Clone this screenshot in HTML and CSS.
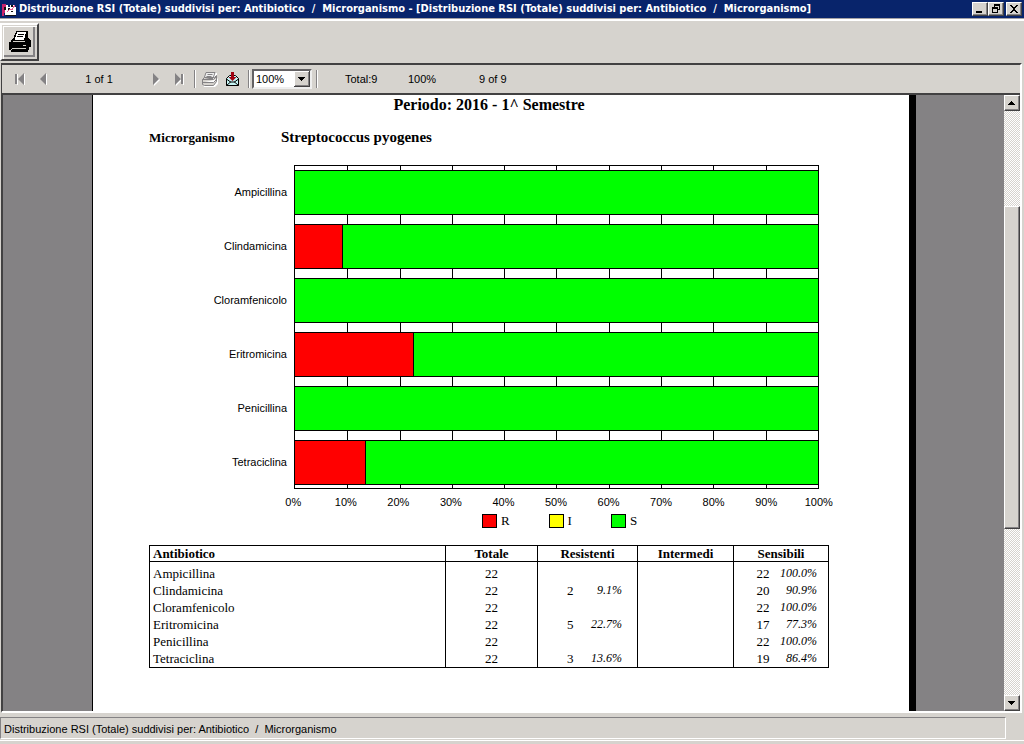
FILE: index.html
```html
<!DOCTYPE html>
<html lang="it">
<head>
<meta charset="utf-8">
<title>Distribuzione RSI (Totale)</title>
<link rel="stylesheet" href="styles.css">
</head>
<body>
<header class="titlebar">
  <svg class="app-icon" width="16" height="16" viewBox="0 0 16 16" shape-rendering="crispEdges">
    <path fill="#c8246c" d="M1 3h4v3H4v6H3v3H1z"/>
    <path fill="#fff" d="M5 4h2v2h2V4h5v2h1v8H4V8h1z"/>
    <path fill="#111" d="M3 6h2v3H3zM7 7h2v2H7zM10 4h2v2h-2zM5 14h10v1H5zM10 10h2v1h-2z"/>
    <path fill="none" stroke="#e85a90" d="M6 11l3-3 2 1 3-5"/>
  </svg>
  <h1 class="title">Distribuzione RSI (Totale) suddivisi per: Antibiotico &nbsp;/ &nbsp;Microrganismo - [Distribuzione RSI (Totale) suddivisi per: Antibiotico &nbsp;/ &nbsp;Microrganismo]</h1>
  <div class="window-buttons">
    <button class="win-btn" aria-label="Riduci a icona"><svg width="12" height="10" viewBox="0 0 12 10" shape-rendering="crispEdges"><path d="M2 7h6v2H2z"/></svg></button>
    <button class="win-btn" aria-label="Ripristina"><svg width="12" height="10" viewBox="0 0 12 10" shape-rendering="crispEdges"><path fill-rule="evenodd" d="M4 0h6v6H8V5h1V2H5v1H4zM2 3h6v6H2zM3 5v3h4V5z"/></svg></button>
    <button class="win-btn close" aria-label="Chiudi"><svg width="12" height="10" viewBox="0 0 12 10" shape-rendering="crispEdges"><path d="M2 1h2v1h1v1h2V2h1V1h2v1H9v1H8v1H7v2h1v1h1v1h1v1H8V8H7V7H5v1H4v1H2V8h1V7h1V6h1V4H4V3H3V2H2z"/></svg></button>
  </div>
</header>

<div class="toolbar">
  <button class="print-btn" aria-label="Stampa">
    <svg width="24" height="24" viewBox="0 0 24 24" shape-rendering="crispEdges">
      <path d="M8 1h12v9H5V8h1V5h1V3h1z"/>
      <path fill="#fff" d="M9 2h9v2h-1v4h-1v2H7V7h1V4h1z"/>
      <path d="M10 4h6v1h-6zM9 6h6v1H9z"/>
      <path d="M4 9h2v1h12V8h3v1h1v1h1v7h-2v3h-1v2H3v-2H1v-8h2v-2h1z"/>
      <path fill="#d4d0c8" d="M5 11h12v1H5zM15 15h3v1h-3zM3 19h1v-1h14v1H4v1H3z"/>
    </svg>
  </button>
</div>

<main class="viewer">
  <nav class="navbar" aria-label="Navigazione report">
    <button class="nav-btn" aria-label="Prima pagina"><svg width="12" height="14" viewBox="0 0 12 14"><path fill="#fff" d="M3 2h1v11H3zM10 2h1v11h-1z"/><path fill="#848284" d="M1 2h2v10H1zM10 1v12L4 7z"/></svg></button>
    <button class="nav-btn" aria-label="Pagina precedente"><svg width="12" height="14" viewBox="0 0 12 14"><path fill="#fff" d="M9 2h1v11H9z"/><path fill="#848284" d="M9 1v12L3 7z"/></svg></button>
    <span class="page-count">1 of 1</span>
    <button class="nav-btn" aria-label="Pagina successiva"><svg width="12" height="14" viewBox="0 0 12 14"><path fill="#fff" d="M4 2l6 6-6 6z"/><path fill="#848284" d="M3 1v12l6-6z"/></svg></button>
    <button class="nav-btn" aria-label="Ultima pagina"><svg width="12" height="14" viewBox="0 0 12 14"><path fill="#fff" d="M3 2l6 6-6 6zM10 2h1v11h-1z"/><path fill="#848284" d="M2 1v12l6-6zM8 2h2v10H8z"/></svg></button>
    <span class="rule"></span>
    <button class="nav-btn" aria-label="Stampa report">
      <svg width="17" height="16" viewBox="0 0 17 16">
        <path fill="#fff" d="M6 2h10v5l1 1v5l-3 3H3l-1-3z"/>
        <path fill="#eee" stroke="#848284" d="M5 1.500h9l-2 6H3z"/>
        <path stroke="#848284" d="M6.500 3.500h5M5.500 5.500h5"/>
        <path fill="#d6d3ce" stroke="#848284" d="M1.500 8.500l2-2h10l2-2v6l-3 4H3.500l-2-1zM1.500 8.500h11l3-3M1.500 11.500h11l3-3"/>
      </svg>
    </button>
    <button class="nav-btn" aria-label="Esporta">
      <svg width="15" height="16" viewBox="0 0 15 16">
        <path fill="#c6f5f5" stroke="#000" d="M1.500 7.500l3-3h6l3 3v7h-12z"/>
        <path fill="none" stroke="#000" d="M1.500 8l4 3-4 3.500M13.500 8l-4 3 4 3.500M5 11h5"/>
        <path fill="#a00010" d="M6 1h3v5h2.500l-4 4-4-4H6z"/>
      </svg>
    </button>
    <span class="rule"></span>
    <select class="zoom" aria-label="Zoom"><option>100%</option></select>
    <span class="rule"></span>
    <span class="stat total">Total:9</span>
    <span class="stat percent">100%</span>
    <span class="stat">9 of 9</span>
  </nav>

  <div class="view">
    <div class="desk">
      <article class="page">
        <h2 class="period">Periodo: 2016 - 1^ Semestre</h2>
        <div class="organism"><span class="organism-label">Microrganismo</span><span class="organism-name">Streptococcus pyogenes</span></div>

        <section class="chart">
          <ul class="names">
            <li>Ampicillina</li><li>Clindamicina</li><li>Cloramfenicolo</li><li>Eritromicina</li><li>Penicillina</li><li>Tetraciclina</li>
          </ul>
          <div class="plot">
            <div class="gridlines"><i></i><i></i><i></i><i></i><i></i><i></i><i></i><i></i><i></i><i></i></div>
            <div class="bars">
              <div class="bar"></div>
              <div class="bar"><span class="res" style="width:9.1%"></span></div>
              <div class="bar"></div>
              <div class="bar"><span class="res" style="width:22.7%"></span></div>
              <div class="bar"></div>
              <div class="bar"><span class="res" style="width:13.6%"></span></div>
            </div>
          </div>
          <div class="axis"><span>0%</span><span>10%</span><span>20%</span><span>30%</span><span>40%</span><span>50%</span><span>60%</span><span>70%</span><span>80%</span><span>90%</span><span>100%</span></div>
          <div class="legend"><span class="key red">R</span><span class="key yellow">I</span><span class="key green">S</span></div>
        </section>

        <table class="data">
          <colgroup><col><col class="c-total"><col class="c-n"><col class="c-res"><col class="c-mid"><col class="c-n"><col class="c-sens"></colgroup>
          <thead><tr><th class="first">Antibiotico</th><th>Totale</th><th colspan="2">Resistenti</th><th>Intermedi</th><th colspan="2">Sensibili</th></tr></thead>
          <tbody>
            <tr><td>Ampicillina</td><td class="tot">22</td><td class="n"></td><td class="p wide"></td><td></td><td class="n">22</td><td class="p">100.0%</td></tr>
            <tr><td>Clindamicina</td><td class="tot">22</td><td class="n">2</td><td class="p wide">9.1%</td><td></td><td class="n">20</td><td class="p">90.9%</td></tr>
            <tr><td>Cloramfenicolo</td><td class="tot">22</td><td class="n"></td><td class="p wide"></td><td></td><td class="n">22</td><td class="p">100.0%</td></tr>
            <tr><td>Eritromicina</td><td class="tot">22</td><td class="n">5</td><td class="p wide">22.7%</td><td></td><td class="n">17</td><td class="p">77.3%</td></tr>
            <tr><td>Penicillina</td><td class="tot">22</td><td class="n"></td><td class="p wide"></td><td></td><td class="n">22</td><td class="p">100.0%</td></tr>
            <tr><td>Tetraciclina</td><td class="tot">22</td><td class="n">3</td><td class="p wide">13.6%</td><td></td><td class="n">19</td><td class="p">86.4%</td></tr>
          </tbody>
        </table>
      </article>
    </div>
    <div class="scrollbar">
      <button class="scroll-btn" aria-label="Scorri in alto"><svg width="8" height="4" viewBox="0 0 8 4" shape-rendering="crispEdges"><path d="M3 0h1v1h1v1h1v1h1v1H0V3h1V2h1V1h1z"/></svg></button>
      <div class="track"><div class="thumb"></div></div>
      <button class="scroll-btn" aria-label="Scorri in basso"><svg width="8" height="4" viewBox="0 0 8 4" shape-rendering="crispEdges"><path d="M0 0h7v1H6v1H5v1H4v1H3V3H2V2H1V1H0z"/></svg></button>
    </div>
  </div>
</main>

<footer class="status"><p class="status-text">Distribuzione RSI (Totale) suddivisi per: Antibiotico &nbsp;/ &nbsp;Microrganismo</p></footer>
</body>
</html>
```
FILE: styles.css
```css
*, ::before { box-sizing: border-box; }
body {
  margin: 0;
  min-height: 100vh;
  display: flex;
  flex-direction: column;
  background: #d6d3ce;
  color: #000;
  font: 11px/14px "Liberation Sans", Arial, sans-serif;
}
h1, h2, p, ul { margin: 0; padding: 0; list-style: none; }
button { padding: 0; border: 0; background: none; color: #000; display: flex; align-items: center; justify-content: center; }
svg { display: block; }

.titlebar { display: flex; align-items: center; height: 18px; padding: 0 2px 0 1px; background: #08246b; color: #fff; }
.title { flex: 1; padding-left: 2px; font: bold 11px/18px "DejaVu Sans Condensed", "DejaVu Sans", sans-serif; white-space: nowrap; overflow: hidden; }
.window-buttons { display: flex; }
.win-btn, .scroll-btn, .thumb {
  background: #d6d3ce;
  border: 1px solid;
  border-color: #fff #424142 #424142 #fff;
  box-shadow: inset -1px -1px #848284;
}
.win-btn { width: 16px; height: 14px; }
.close { margin-left: 2px; }

.toolbar { height: 45px; padding-top: 4px; border-top: 1px solid #a5a2a5; box-shadow: inset 0 2px #fff; }
.print-btn {
  width: 39px;
  height: 38px;
  border: 2px solid;
  border-color: #fff #424142 #424142 #fff;
  box-shadow: inset 1px 1px #d6d3ce, inset 2px 2px #fff, inset -2px -2px #d6d3ce, inset -4px -4px #848284;
}

.viewer {
  flex: 1;
  display: flex;
  flex-direction: column;
  margin: 0 2px 0 1px;
  border: solid;
  border-width: 2px 2px 2px 1px;
  border-color: #424142 #fff #fff #424142;
}
.navbar { display: flex; align-items: center; height: 28px; padding-left: 6px; }
.nav-btn { width: 23px; height: 20px; flex: none; }
.page-count { width: 90px; text-align: center; }
.rule { width: 2px; height: 18px; margin: 0 2px 0 4px; border-left: 1px solid #848284; border-right: 1px solid #fff; }
.zoom {
  appearance: none;
  width: 60px;
  height: 20px;
  padding: 0 2px;
  border: 2px solid;
  border-color: #636163 #eee #eee #636163;
  border-radius: 0;
  font: inherit;
  color: #000;
  background: #fff url("data:image/svg+xml,%3Csvg xmlns='http://www.w3.org/2000/svg' width='16' height='16' shape-rendering='crispEdges'%3E%3Cpath fill='%23424142' d='M0 0h16v16H0z'/%3E%3Cpath fill='%23fff' d='M0 0h15v15H0z'/%3E%3Cpath fill='%23848284' d='M1 1h14v14H1z'/%3E%3Cpath fill='%23d6d3ce' d='M1 1h13v13H1z'/%3E%3Cpath d='M4 6h7v1h-1v1H9v1H8v1H7V9H6V8H5V7H4z'/%3E%3C/svg%3E") right center no-repeat;
}
.stat.total { width: 63px; margin-left: 25px; }
.stat.percent { width: 71px; }

.view { flex: 1; display: flex; border-top: 2px solid #424142; border-left: 1px solid #424142; }
.desk { flex: 1; padding: 0 88px 0 89px; background: #848284; }
.page {
  height: 100%;
  padding: 0 80px 24px 56px;
  background: #fff;
  border-left: 1px solid #000;
  border-right: 7px solid #000;
  font-family: "Liberation Serif", "Times New Roman", serif;
}
.period { padding-top: 1px; font-size: 16px; line-height: 18px; text-align: center; }
.organism { display: flex; align-items: baseline; padding-top: 14px; font-weight: bold; line-height: 18px; }
.organism-label { width: 132px; font-size: 13px; }
.organism-name { font-size: 15px; }

.chart {
  display: grid;
  grid-template-columns: 145px 1fr;
  margin: 18px 10px 0 0;
  font-family: "Liberation Sans", Arial, sans-serif;
}
.names { display: flex; flex-direction: column; gap: 9px; padding: 5px 7px 0 0; }
.names li { height: 45px; line-height: 45px; text-align: right; }
.plot { display: grid; border: 1px solid #000; }
.gridlines, .bars { grid-area: 1 / 1; }
.gridlines { display: grid; grid-template-columns: repeat(10, 1fr); }
.gridlines i + i { border-left: 1px solid #000; }
.bars { display: flex; flex-direction: column; gap: 9px; padding: 4px 0 3px; z-index: 1; }
.bar { display: flex; height: 45px; background: #0f0; border: solid #000; border-width: 1px 0; }
.res { background: #f00; border-right: 1px solid #000; }
.axis { grid-column: 2; display: grid; grid-template-columns: repeat(11, 1fr); margin: 6px -26px 0 -27px; text-align: center; }
.legend { grid-column: 2; display: flex; justify-content: center; gap: 39px; padding: 4px 0 0 6px; font: 13px/16px "Liberation Serif", "Times New Roman", serif; }
.key { display: flex; gap: 4px; }
.key::before { content: ""; width: 15px; height: 14px; margin-top: 1px; border: 1px solid #000; background: #f00; }
.yellow::before { background: #ff0; }
.green::before { background: #0f0; }

.data { width: 100%; margin-top: 16px; table-layout: fixed; border-collapse: collapse; border: 1px solid #000; font-size: 13px; line-height: 17px; }
.c-total { width: 92px; }
.c-n { width: 37px; }
.c-res { width: 63px; }
.c-sens { width: 58px; }
.c-mid { width: 96px; }
.data th { padding: 0 4px; height: 16px; line-height: 15px; border: 1px solid #000; }
.data .first { padding-left: 3px; text-align: left; }
.data td { padding: 0 3px; height: 17px; border-left: 1px solid #000; }
.data tbody tr:first-child td { padding-top: 3px; }
.data .tot { text-align: center; }
.data .n { padding: 0 1px; text-align: right; }
.data .p { padding-right: 11px; border-left: 0; text-align: right; font-style: italic; font-size: 12px; }
.data .wide { padding-right: 15px; }

.scrollbar { display: flex; flex-direction: column; width: 16px; }
.scroll-btn { width: 16px; height: 16px; }
.track { flex: 1; display: grid; grid-template-rows: 95fr 323fr 166fr; background: repeating-conic-gradient(#fff 0 25%, #d6d3ce 0 50%) 0 0 / 2px 2px; }
.thumb { grid-row: 2; }

.status { padding: 4px 18px 5px 0; box-shadow: inset 0 -3px #d6d3ce, inset 0 -4px #fff; }
.status-text { height: 22px; padding-left: 3px; border: 1px solid; border-color: #848284 #fff #fff #848284; line-height: 22px; }
```
